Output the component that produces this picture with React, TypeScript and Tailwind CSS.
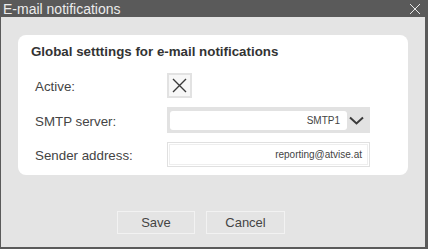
import React from "react";

export default function App() {
  return (
    <div
      className="w-[428px] h-[249px] bg-[#5a5a5a] flex flex-col pl-[1px] pr-[3px] pb-[2px]"
      style={{ fontFamily: '"Liberation Sans", Arial, sans-serif' }}
    >
      <div className="h-[17px] flex items-center justify-between pl-[2px] pr-[4px]">
        <span className="text-[14px] leading-none text-[#ececec]">E-mail notifications</span>
        <svg width="12" height="12" viewBox="0 0 12 12" className="mt-[1px]">
          <path d="M1 1 L11 11 M11 1 L1 11" stroke="#e8e8e8" strokeWidth="1" fill="none" />
        </svg>
      </div>
      <div className="flex-1 bg-[#e4e4e4] flex flex-col pt-[18px] px-[17px]">
        <div className="h-[140px] bg-white rounded-[8px] pt-[9px] pl-[13px] flex flex-col">
          <div className="h-[16px] text-[13.33px] leading-[16px] font-bold text-[#333]">
            Global setttings for e-mail notifications
          </div>
          <div className="mt-[13px] flex items-center h-[25px]">
            <div className="w-[136px] pl-[4px] text-[13.33px] text-[#444] mt-[3px]">Active:</div>
            <div className="w-[25px] h-[25px] bg-[#e2e2e2] p-[2px]">
              <div className="w-full h-full bg-[#f7f7f7] flex items-center justify-center">
                <svg width="15" height="15" viewBox="0 0 15 15">
                  <path d="M1 1 L14 14 M14 1 L1 14" stroke="#3a3a3a" strokeWidth="1.4" fill="none" />
                </svg>
              </div>
            </div>
          </div>
          <div className="mt-[9px] flex items-center h-[26px]">
            <div className="w-[136px] pl-[4px] text-[13.33px] text-[#444] mt-[3px]">SMTP server:</div>
            <div className="w-[203px] h-[26px] bg-[#e2e2e2] flex items-center pl-[3px] pr-[4px]">
              <div className="w-[177px] h-[19px] bg-white rounded-[3px] flex items-center justify-end pr-[7px] text-[10px] text-[#444]">
                SMTP1
              </div>
              <div className="flex-1 flex items-center justify-center">
                <svg width="15" height="9" viewBox="0 0 15 9">
                  <path d="M1 1.5 L7.5 7.5 L14 1.5" stroke="#3a3a3a" strokeWidth="2" fill="none" />
                </svg>
              </div>
            </div>
          </div>
          <div className="mt-[9px] flex items-center h-[25px]">
            <div className="w-[136px] pl-[4px] text-[13.33px] text-[#444] mt-[3px]">Sender address:</div>
            <div className="w-[203px] h-[25px] border border-[#e0e0e0] p-[1px] bg-white">
              <div className="w-full h-full border border-[#eeeeee] flex items-center justify-end pr-[5px] text-[10px] text-[#444]">
                reporting@atvise.at
              </div>
            </div>
          </div>
        </div>
        <div className="mt-[36px] flex pl-[99px] gap-[11px]">
          <div className="w-[78px] h-[23px] bg-[#e4e4e4] border border-[#f2f2f2] flex items-center justify-center text-[13px] text-[#444]">
            Save
          </div>
          <div className="w-[79px] h-[23px] bg-[#e4e4e4] border border-[#f2f2f2] flex items-center justify-center text-[13px] text-[#444]">
            Cancel
          </div>
        </div>
      </div>
    </div>
  );
}
